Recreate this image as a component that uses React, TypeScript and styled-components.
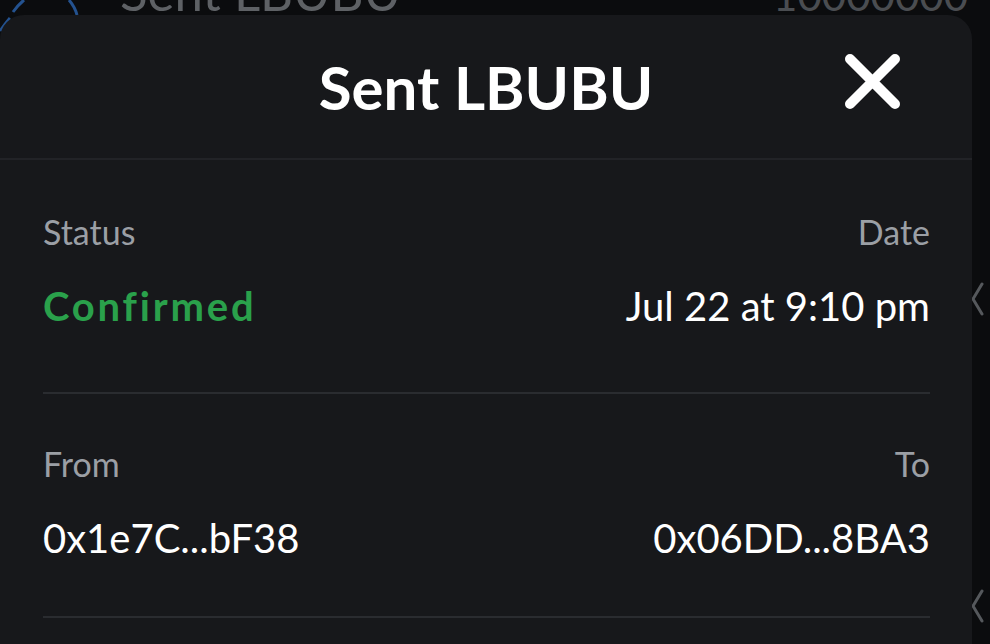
import React from 'react'
import styled, { createGlobalStyle } from 'styled-components'

const GlobalStyle = createGlobalStyle`
  html, body {
    margin: 0;
    padding: 0;
    background: #0b0c0e;
    overflow: hidden;
  }
  * { box-sizing: border-box; }
`

const FONT = `'Lato', 'Liberation Sans', sans-serif`

const ChevronIcon = () => (
  <svg width="14" height="34" viewBox="0 0 14 34">
    <path d="M12 2 L3 17 L12 32" stroke="#55585c" strokeWidth="3" fill="none" strokeLinecap="round" strokeLinejoin="round" />
  </svg>
)

function App() {
  return (
    <Page>
      <GlobalStyle />
      <Backdrop>
        <BackRow>
          <BackTitle>Sent LBUBU</BackTitle>
          <BackAmount>10000000</BackAmount>
        </BackRow>
        <Chevrons>
          <ChevronIcon />
          <ChevronIcon />
        </Chevrons>
        <Avatar width="90" height="40" viewBox="0 0 90 40">
          <path d="M0 31 Q5 24 10 18" stroke="#24528f" strokeWidth="3" fill="none" />
          <path d="M13 12 Q18 5 24 0" stroke="#24528f" strokeWidth="3" fill="none" />
          <path d="M69 0 Q75 7 77 15" stroke="#24528f" strokeWidth="3" fill="none" />
        </Avatar>
      </Backdrop>

      <Modal>
        <Header>
          <Title>Sent LBUBU</Title>
          <CloseButton aria-label="Close">
            <svg width="60" height="60" viewBox="0 0 60 60">
              <path d="M7 7 L52 52 M52 7 L7 52" stroke="#fff" strokeWidth="10" strokeLinecap="round" />
            </svg>
          </CloseButton>
        </Header>
        <Body>
          <Section extra>
            <Cell>
              <Label>Status</Label>
              <Value tone="green">Confirmed</Value>
            </Cell>
            <Cell align="right">
              <Label>Date</Label>
              <Value>Jul 22 at 9:10 pm</Value>
            </Cell>
          </Section>
          <Section>
            <Cell>
              <Label>From</Label>
              <Value>0x1e7C...bF38</Value>
            </Cell>
            <Cell align="right">
              <Label>To</Label>
              <Value>0x06DD...8BA3</Value>
            </Cell>
          </Section>
        </Body>
      </Modal>
    </Page>
  )
}

const Page = styled.div`
  position: relative;
  width: 990px;
  height: 644px;
  overflow: hidden;
  font-family: ${FONT};
  background: #0b0c0e;
`

const Backdrop = styled.div`
  position: relative;
  height: 644px;
`

const Avatar = styled.svg`
  position: absolute;
  left: 0;
  top: 0;
`

const BackRow = styled.div`
  display: flex;
  justify-content: space-between;
  align-items: flex-end;
  padding: 0 22px 0 120px;
  height: 22px;
`

const BackTitle = styled.span`
  font-size: 51px;
  line-height: 1.2;
  color: #5e6165;
`

const BackAmount = styled.span`
  font-size: 42px;
  line-height: 1.2;
  margin-bottom: 2px;
  color: #4a4d51;
`

const Chevrons = styled.div`
  display: flex;
  flex-direction: column;
  align-items: flex-end;
  gap: 273px;
  padding: 260px 6px 0 0;
`

const Modal = styled.div`
  position: absolute;
  left: 0;
  top: 15px;
  width: 972px;
  height: 700px;
  background: #17181b;
  border-radius: 24px;
`

const Header = styled.div`
  position: relative;
  height: 145px;
  display: flex;
  align-items: center;
  justify-content: center;
  border-bottom: 2px solid #222327;
`

const Title = styled.h1`
  margin: 0;
  font-size: 60px;
  font-weight: 700;
  color: #ffffff;
`

const CloseButton = styled.button`
  position: absolute;
  right: 69px;
  top: 37px;
  background: none;
  border: 0;
  padding: 0;
  display: flex;
`

const Body = styled.div`
  padding: 0 42px 0 43px;
`

const Section = styled.div<{ extra?: boolean }>`
  display: flex;
  justify-content: space-between;
  padding: ${p => (p.extra ? '52px 0 64px' : '50px 0 56px')};
  border-bottom: 2px solid #2a2c30;
`

const Cell = styled.div<{ align?: 'right' }>`
  display: flex;
  flex-direction: column;
  gap: 32px;
  align-items: ${p => (p.align === 'right' ? 'flex-end' : 'flex-start')};
`

const Label = styled.span`
  font-size: 34px;
  line-height: 40px;
  color: #9b9fa5;
`

const Value = styled.span<{ tone?: 'green' }>`
  font-size: 40px;
  line-height: 44px;
  font-weight: ${p => (p.tone === 'green' ? 700 : 400)};
  letter-spacing: ${p => (p.tone === 'green' ? '2.8px' : '0')};
  color: ${p => (p.tone === 'green' ? '#2aa14b' : '#ffffff')};
`

export default App
